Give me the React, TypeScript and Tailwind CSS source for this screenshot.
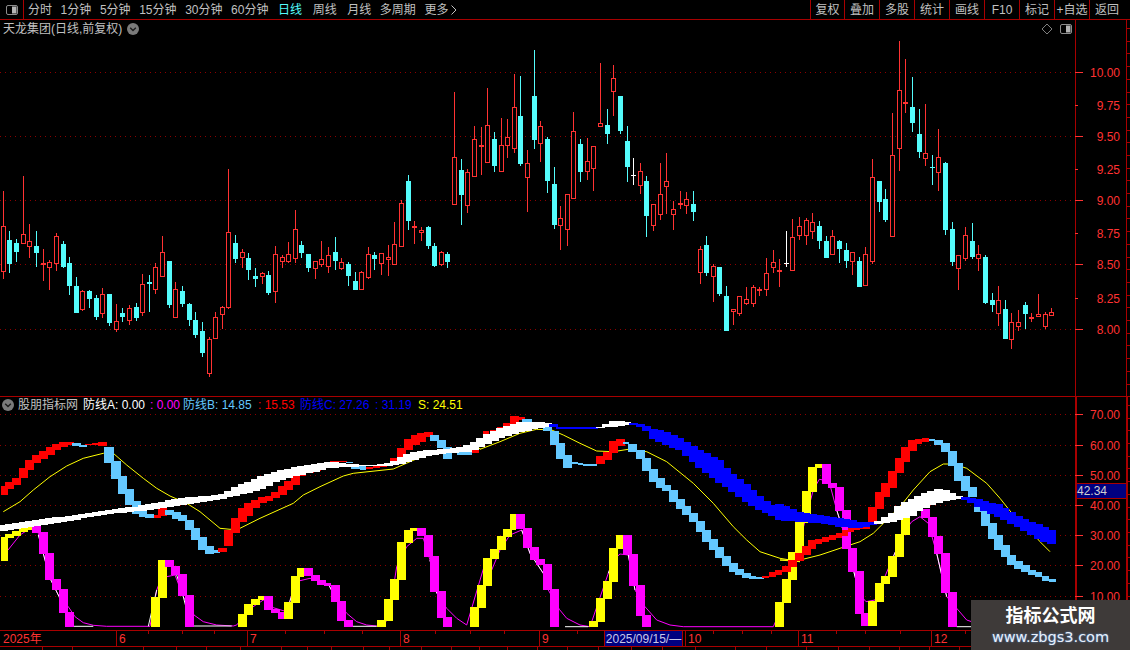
import React from 'react';

const RED = '#ff3232';
const CYAN = '#54fcfc';
const SKY = '#64c8ff';
const STEP = 6.633;

type Row = number[];
// candle rows were read from 3x crops: [centre, wick top, body top, body bottom, wick bottom]
type Candle = { x: number; wt: number; bt: number; bb: number; wb: number; kind: string };

const candleSeg = (x0: number, y0: number, rows: (number | string)[][]): Candle[] =>
    rows.map((r) => ({
        x: Math.round(x0 + (r[0] as number) / 3 - 0.2),
        wt: Math.round(y0 + (r[1] as number) / 3),
        bt: Math.round(y0 + (r[2] as number) / 3),
        bb: Math.round(y0 + (r[3] as number) / 3),
        wb: Math.round(y0 + (r[4] as number) / 3),
        kind: r[5] as string,
    }));

const candles: Candle[] = [
    ...candleSeg(0, 160, [
        [10, 93, 198, 335, 357, 'r'], [28, 213, 240, 312, 340, 'c'], [49, 237, 249, 276, 306, 'c'], [70, 48, 222, 252, 252, 'r'],
        [88, 192, 244, 260, 294, 'r'], [109, 213, 258, 279, 321, 'c'], [130, 267, 309, 315, 363, 'r'], [148, 300, 307, 323, 390, 'r'],
        [169, 219, 229, 311, 333, 'r'], [190, 243, 252, 321, 324, 'c'], [208, 291, 309, 378, 405, 'c'], [229, 351, 378, 459, 459, 'c'],
        [247, 390, 394, 449, 453, 'r'], [268, 390, 393, 417, 444, 'c'], [289, 405, 414, 471, 480, 'c'], [307, 384, 403, 461, 474, 'r'],
        [328, 402, 402, 489, 498, 'c'], [349, 432, 484, 509, 516, 'r'], [367, 444, 459, 471, 486, 'c'], [388, 435, 445, 482, 495, 'r'],
        [409, 429, 441, 474, 483, 'c'], [427, 342, 373, 458, 468, 'r'], [448, 345, 366, 372, 456, 'c'], [466, 309, 322, 391, 402, 'r'],
        [487, 228, 277, 350, 350, 'r'], [508, 303, 303, 435, 444, 'c'], [526, 366, 388, 473, 473, 'r'], [547, 378, 393, 432, 441, 'c'],
        [568, 429, 432, 480, 498, 'c'], [586, 456, 480, 525, 534, 'c'], [607, 486, 513, 579, 591, 'c'], [628, 531, 538, 641, 651, 'r'],
        [646, 456, 472, 536, 536, 'r'], [667, 438, 442, 464, 507, 'r'], [685, 27, 217, 443, 447, 'r'], [706, 225, 249, 297, 309, 'c'],
        [727, 267, 277, 293, 324, 'r'], [745, 279, 294, 330, 360, 'c'], [766, 324, 348, 357, 381, 'c'], [787, 336, 340, 350, 372, 'r'],
        [805, 333, 345, 399, 405, 'c'], [826, 258, 283, 395, 429, 'r'], [847, 285, 292, 305, 324, 'r'], [865, 246, 283, 305, 309, 'r'],
        [886, 150, 208, 296, 309, 'r'],
    ]),
    ...candleSeg(300, 50, [
        [5, 573, 585, 609, 624, 'c'], [25, 612, 612, 654, 666, 'c'], [46, 633, 634, 656, 687, 'r'], [64, 573, 628, 644, 651, 'r'],
        [85, 591, 616, 650, 669, 'r'], [106, 561, 606, 633, 660, 'c'], [124, 624, 637, 656, 660, 'r'], [145, 636, 642, 678, 708, 'c'],
        [166, 666, 693, 720, 720, 'c'], [184, 663, 667, 719, 720, 'r'], [205, 591, 613, 683, 687, 'r'], [223, 606, 615, 627, 660, 'c'],
        [244, 609, 610, 641, 675, 'r'], [265, 585, 622, 629, 678, 'r'], [283, 516, 583, 644, 644, 'r'], [304, 450, 460, 590, 590, 'r'],
        [325, 375, 393, 513, 540, 'c'], [343, 513, 528, 534, 582, 'r'], [364, 531, 541, 548, 573, 'r'], [385, 528, 531, 588, 597, 'c'],
        [403, 579, 588, 648, 651, 'c'], [424, 603, 607, 645, 648, 'r'], [442, 606, 612, 636, 654, 'c'], [463, 126, 322, 464, 464, 'r'],
        [484, 327, 360, 435, 525, 'c'], [502, 357, 367, 467, 489, 'r'], [523, 228, 268, 380, 380, 'r'], [544, 231, 285, 291, 375, 'r'],
        [562, 114, 226, 338, 338, 'r'], [583, 246, 267, 348, 366, 'c'], [604, 204, 286, 365, 365, 'r'], [622, 207, 262, 287, 324, 'r'],
        [643, 72, 172, 296, 309, 'r'], [661, 78, 198, 342, 348, 'c'], [682, 300, 340, 383, 486, 'r'], [703, 0, 138, 270, 297, 'c'],
        [721, 213, 229, 281, 336, 'r'], [742, 262, 267, 393, 429, 'c'], [763, 351, 402, 525, 537, 'c'], [781, 468, 505, 527, 600, 'r'],
        [802, 433, 433, 539, 588, 'r'], [820, 186, 244, 446, 446, 'r'], [841, 267, 282, 366, 396, 'c'], [862, 264, 334, 365, 390, 'r'],
        [880, 288, 289, 356, 423, 'r'],
    ]),
    ...candleSeg(600, 50, [
        [0, 39, 220, 230, 230, 'r'], [22, 177, 225, 252, 282, 'c'], [40, 45, 85, 125, 198, 'r'], [61, 138, 138, 243, 252, 'c'],
        [82, 228, 273, 351, 396, 'c'], [100, 324, 376, 377, 405, 'w'], [121, 339, 364, 407, 432, 'r'], [139, 378, 393, 498, 561, 'c'],
        [160, 462, 463, 527, 543, 'r'], [181, 339, 433, 495, 510, 'r'], [199, 309, 394, 410, 492, 'r'], [220, 453, 478, 494, 540, 'r'],
        [241, 423, 460, 464, 477, 'r'], [259, 426, 448, 467, 492, 'r'], [280, 423, 462, 486, 513, 'c'], [301, 588, 598, 670, 702, 'r'],
        [319, 558, 585, 669, 678, 'c'], [340, 642, 649, 680, 756, 'r'], [358, 651, 651, 732, 738, 'c'], [379, 708, 738, 843, 843, 'c'],
        [400, 778, 778, 785, 825, 'r'], [418, 739, 739, 791, 798, 'r'], [439, 711, 748, 762, 765, 'r'], [460, 705, 712, 762, 771, 'r'],
        [478, 711, 717, 723, 738, 'r'], [499, 624, 670, 719, 738, 'r'], [520, 600, 637, 653, 669, 'r'], [538, 627, 660, 665, 711, 'r'],
        [559, 543, 639, 641, 651, 'w'], [577, 507, 562, 662, 662, 'r'], [598, 501, 529, 557, 570, 'r'], [619, 504, 511, 557, 585, 'r'],
        [637, 489, 517, 547, 567, 'r'], [658, 513, 528, 573, 597, 'c'], [679, 558, 573, 624, 624, 'c'], [697, 540, 559, 614, 615, 'r'],
        [718, 570, 573, 597, 639, 'c'],
    ]),
    ...candleSeg(840, 30, [
        [19, 639, 660, 693, 714, 'c'], [37, 666, 667, 695, 735, 'r'], [58, 681, 693, 771, 771, 'c'], [76, 651, 673, 767, 767, 'r'],
        [97, 387, 442, 695, 702, 'r'], [118, 453, 453, 516, 546, 'c'], [136, 477, 507, 570, 576, 'c'], [157, 249, 376, 620, 620, 'r'],
        [178, 33, 181, 358, 423, 'r'], [196, 87, 217, 223, 249, 'r'], [217, 141, 231, 279, 306, 'c'], [238, 237, 312, 366, 384, 'c'],
        [256, 222, 370, 388, 408, 'r'], [277, 375, 411, 413, 465, 'w2'], [295, 297, 382, 428, 483, 'r'], [316, 396, 399, 600, 615, 'c'],
        [337, 576, 597, 696, 708, 'c'], [355, 676, 676, 716, 780, 'r'], [376, 591, 616, 686, 693, 'r'], [397, 579, 633, 681, 687, 'c'],
        [415, 645, 673, 686, 723, 'r'], [436, 675, 681, 820, 822, 'c'], [457, 789, 810, 825, 846, 'c'], [475, 768, 811, 851, 888, 'r'],
        [496, 810, 837, 927, 927, 'c'], [514, 849, 877, 929, 957, 'r'], [535, 840, 877, 890, 903, 'r'], [556, 816, 825, 852, 897, 'c'],
        [574, 849, 861, 866, 876, 'r'], [595, 792, 853, 862, 862, 'r'], [616, 846, 853, 890, 897, 'r'], [634, 834, 847, 859, 859, 'r'],
    ]),
];

type Bar = { x: number; w: number; y: number; h: number; fill: string };

const barSeg = (x0: number, y0: number, fill: string, rows: Row[]): Bar[] =>
    rows.map(([l, r, t, b]) => {
        const x = Math.round(x0 + l / 3);
        const y = Math.round(y0 + t / 3);
        return { x, w: Math.round(x0 + r / 3) - x, y, h: Math.max(1, Math.round(y0 + b / 3) - y), fill };
    });

// 防线A
const lineA: Bar[] = [
    ...barSeg(0, 510, '#ffff00', [[3, 24, 81, 153], [15, 42, 72, 85], [36, 63, 63, 78], [57, 84, 54, 66], [78, 96, 50, 60]]),
    ...barSeg(0, 510, '#ff00ff', [[96, 123, 48, 69], [117, 144, 66, 132], [135, 162, 129, 210], [156, 183, 207, 240], [177, 204, 237, 309], [195, 222, 306, 351]]),
    ...barSeg(0, 510, '#ffff00', [[453, 480, 261, 351], [474, 501, 150, 264]]),
    ...barSeg(0, 510, '#ff00ff', [[495, 522, 150, 171], [513, 540, 168, 196], [534, 561, 192, 258], [555, 582, 255, 351]]),
    ...barSeg(0, 510, '#ffff00', [[714, 741, 312, 351], [732, 759, 282, 315], [753, 780, 267, 285], [774, 792, 258, 270]]),
    ...barSeg(0, 510, '#ff00ff', [[792, 819, 258, 300], [813, 840, 297, 309], [834, 861, 306, 327]]),
    ...barSeg(0, 510, '#ffff00', [[852, 879, 276, 327], [873, 900, 198, 279], [891, 912, 174, 200]]),
    ...barSeg(0, 510, '#ff00ff', [[912, 939, 174, 198], [933, 960, 195, 213], [951, 978, 210, 225], [972, 993, 219, 228], [993, 1020, 225, 276], [1011, 1038, 273, 333], [1032, 1059, 330, 351]]),
    ...barSeg(0, 510, '#ffff00', [[1131, 1158, 330, 351], [1152, 1179, 267, 333], [1170, 1197, 207, 270], [1191, 1218, 96, 210], [1212, 1239, 60, 99], [1230, 1251, 54, 63]]),
    ...barSeg(0, 510, '#ff00ff', [[1251, 1278, 54, 78], [1272, 1299, 75, 141], [1290, 1317, 138, 246], [1311, 1338, 243, 324], [1329, 1356, 321, 351]]),
    ...barSeg(480, 400, '#ffff00', [[-30, -3, 621, 681], [-9, 18, 556, 624], [9, 36, 474, 558], [30, 57, 447, 477], [51, 78, 408, 450], [69, 96, 387, 411], [90, 108, 342, 390]]),
    ...barSeg(480, 400, '#ff00ff', [[108, 135, 342, 387], [129, 156, 384, 444], [150, 177, 441, 480], [168, 195, 477, 495], [189, 216, 492, 570], [210, 237, 567, 681]]),
    ...barSeg(480, 400, '#ffff00', [[327, 354, 663, 681], [348, 375, 594, 666], [369, 396, 543, 597], [387, 414, 444, 546], [408, 429, 405, 447]]),
    ...barSeg(480, 400, '#ff00ff', [[429, 456, 405, 465], [447, 474, 462, 558], [468, 495, 555, 648], [486, 513, 645, 681]]),
    ...barSeg(780, 400, '#ffff00', [[-15, 12, 606, 681], [6, 33, 537, 609], [24, 51, 456, 540], [45, 72, 366, 459], [66, 93, 273, 369], [84, 111, 201, 276], [105, 126, 192, 204]]),
    ...barSeg(780, 400, '#ff00ff', [[126, 153, 192, 252], [144, 171, 249, 264], [165, 192, 261, 333], [186, 213, 330, 447], [204, 231, 444, 516], [225, 252, 513, 642], [243, 270, 639, 678]]),
    ...barSeg(780, 400, '#ffff00', [[264, 291, 603, 678], [285, 312, 549, 606], [303, 330, 528, 552], [324, 351, 468, 531], [345, 372, 402, 471], [363, 390, 345, 405], [384, 411, 330, 348]]),
    ...barSeg(780, 400, '#ff00ff', [[423, 450, 327, 354], [444, 471, 351, 411], [462, 489, 408, 462], [483, 510, 459, 579], [504, 531, 576, 681]]),
];

// 防线B
const lineB: Bar[] = [
    ...barSeg(0, 390, '#ff0000', [[3, 24, 288, 315], [15, 42, 276, 297], [36, 63, 264, 285], [57, 84, 234, 264], [75, 102, 210, 240], [96, 123, 195, 219], [117, 144, 183, 207], [138, 165, 171, 195], [156, 183, 162, 180], [177, 204, 156, 171], [195, 222, 156, 165]]),
    ...barSeg(0, 390, SKY, [[216, 243, 159, 168], [237, 261, 165, 171]]),
    ...barSeg(0, 390, '#ff0000', [[255, 282, 162, 165], [276, 303, 159, 165], [294, 321, 156, 168]]),
    ...barSeg(0, 390, SKY, [[312, 342, 171, 219], [333, 363, 213, 267], [354, 381, 258, 312], [375, 402, 297, 345], [396, 423, 333, 372], [417, 441, 363, 381], [435, 462, 372, 384]]),
    ...barSeg(0, 390, '#ff0000', [[462, 483, 375, 384], [474, 501, 351, 378]]),
    ...barSeg(0, 390, SKY, [[495, 522, 360, 375], [516, 543, 366, 387], [534, 561, 375, 393]]),
    ...barSeg(0, 510, SKY, [[555, 582, 30, 60], [573, 600, 54, 90], [594, 621, 81, 120], [615, 642, 108, 132], [639, 660, 120, 129]]),
    ...barSeg(0, 510, '#ff0000', [[654, 681, 114, 126], [672, 699, 60, 108], [693, 720, 24, 69]]),
    ...barSeg(0, 390, '#ff0000', [[714, 741, 354, 396], [732, 759, 339, 378], [753, 780, 330, 354], [774, 801, 321, 339], [795, 819, 318, 333], [813, 840, 306, 324], [834, 861, 288, 315], [852, 879, 273, 300], [873, 900, 258, 285], [894, 918, 249, 258], [915, 942, 240, 250], [936, 963, 234, 244], [960, 990, 222, 232], [990, 1040, 213, 216]]),
    ...barSeg(0, 390, SKY, [[1038, 1060, 216, 220], [1053, 1080, 225, 238], [1080, 1098, 228, 241]]),
    ...barSeg(0, 390, '#ff0000', [[1098, 1119, 231, 237], [1119, 1140, 228, 234], [1140, 1160, 222, 230], [1170, 1191, 204, 216], [1191, 1218, 174, 204], [1212, 1239, 147, 180], [1233, 1260, 135, 165], [1251, 1278, 129, 156], [1272, 1299, 126, 141]]),
    ...barSeg(0, 390, SKY, [[1290, 1317, 135, 153], [1311, 1338, 150, 174], [1329, 1356, 171, 207], [1350, 1371, 183, 189], [1371, 1392, 186, 195], [1392, 1416, 186, 195]]),
    ...barSeg(0, 390, '#ff0000', [[1416, 1437, 177, 189]]),
    ...barSeg(480, 400, '#ff0000', [[9, 27, 93, 102], [30, 48, 90, 100], [51, 69, 81, 93], [69, 90, 69, 84], [90, 117, 48, 72], [117, 135, 51, 60]]),
    ...barSeg(480, 400, SKY, [[126, 156, 57, 69], [189, 216, 81, 93], [210, 237, 93, 135], [228, 255, 129, 177], [249, 276, 165, 204], [276, 294, 186, 192], [294, 309, 189, 195], [309, 330, 192, 198], [330, 351, 192, 198]]),
    ...barSeg(480, 400, '#ff0000', [[348, 375, 168, 192], [369, 396, 156, 180], [387, 414, 123, 159], [408, 435, 117, 138]]),
    ...barSeg(480, 400, SKY, [[429, 447, 126, 132], [444, 471, 132, 156], [468, 495, 150, 177], [486, 513, 174, 213], [507, 534, 207, 246], [528, 555, 234, 264], [546, 573, 255, 273], [567, 594, 270, 306], [588, 615, 297, 327], [606, 633, 318, 345], [627, 654, 339, 366], [648, 675, 363, 396], [666, 693, 390, 426], [687, 714, 417, 450], [705, 732, 441, 474], [726, 753, 468, 498], [747, 774, 489, 516], [765, 792, 507, 525], [786, 813, 519, 534], [807, 828, 528, 537], [828, 852, 531, 537]]),
    ...barSeg(480, 400, '#ff0000', [[846, 867, 528, 534], [867, 888, 516, 531], [885, 906, 510, 525], [906, 933, 498, 516]]),
    ...barSeg(780, 400, '#ff0000', [[24, 51, 480, 501], [45, 72, 459, 483], [66, 93, 438, 465], [84, 108, 420, 447], [105, 126, 417, 432], [126, 147, 411, 426], [147, 168, 405, 420], [168, 186, 399, 414], [186, 204, 390, 408], [204, 222, 381, 396], [222, 240, 381, 390], [240, 270, 378, 387]]),
    ...barSeg(780, 400, '#ff0000', [[264, 291, 321, 366], [285, 312, 276, 327], [303, 330, 249, 291], [324, 351, 213, 264], [345, 372, 174, 219], [363, 390, 141, 186], [384, 411, 120, 153], [405, 426, 117, 132], [426, 447, 114, 126]]),
    ...barSeg(780, 400, SKY, [[447, 465, 117, 123], [462, 489, 120, 135], [483, 510, 129, 156], [504, 531, 153, 198], [522, 549, 189, 243], [543, 570, 228, 273], [564, 591, 261, 291], [582, 606, 312, 336], [603, 630, 333, 378], [624, 651, 369, 417], [642, 669, 405, 450], [663, 690, 435, 471], [681, 708, 465, 495], [702, 729, 483, 507], [723, 750, 495, 516], [744, 768, 510, 525], [765, 786, 516, 531], [786, 807, 528, 543], [807, 828, 537, 546]]),
];

// 防线C keypoints: [x, top, bottom], filled in per candle below
const ribbonC: Row[] = [
    [0, 526, 531], [40, 519, 525], [80, 515, 519], [100, 511, 515], [140, 506, 511], [180, 498, 505], [220, 495, 499], [240, 485, 495],
    [260, 477, 490], [280, 470, 480], [310, 465, 473], [330, 462, 468], [350, 464, 467], [370, 465, 466], [390, 463, 466], [410, 453, 462],
    [430, 450, 455], [450, 449, 453], [470, 445, 452], [480, 438, 447], [500, 428, 438], [520, 422, 432], [540, 422, 428], [552, 423, 427],
    [560, 427, 429], [590, 427, 429], [600, 427, 428], [612, 421, 427], [625, 421, 425], [632, 423, 425], [645, 425, 428], [650, 428, 437],
    [670, 433, 447], [680, 438, 450], [700, 450, 468], [720, 460, 483], [730, 472, 490], [750, 487, 505], [770, 505, 515], [780, 504, 520],
    [800, 512, 522], [820, 515, 523], [840, 518, 527], [860, 522, 528], [877, 522, 524], [890, 515, 522], [900, 505, 520], [910, 500, 517],
    [920, 495, 510], [940, 488, 502], [950, 492, 500], [962, 497, 498], [970, 498, 502], [983, 500, 510], [1000, 505, 518], [1020, 517, 528],
    [1040, 525, 540], [1055, 532, 545],
];

const lerpC = (x: number) => {
    for (let k = 1; k < ribbonC.length; k++) {
        const [x1, t1, b1] = ribbonC[k - 1];
        const [x2, t2, b2] = ribbonC[k];
        if (x <= x2) {
            const f = (x - x1) / (x2 - x1);
            return [t1 + (t2 - t1) * f, b1 + (b2 - b1) * f];
        }
    }
    return [532, 545];
};

const isWhiteC = (x: number) => x < 552 || (x > 600 && x < 632) || (x > 877 && x < 965);

const lineC: Bar[] = Array.from({ length: 159 }, (_, i) => {
    const cx = 3.3 + STEP * i;
    const [t, b] = lerpC(cx);
    const left = Math.max(0, Math.round(cx - 4.5));
    const y = Math.round(t);
    return { x: left, w: Math.round(cx + 4.5) - left, y, h: Math.max(1, Math.round(b) - y), fill: isWhiteC(cx) ? '#ffffff' : '#0000ff' };
});

const pts = (x0: number, y0: number, s: string) =>
    s.split(' ').map((p) => {
        const [a, b] = p.split(',').map(Number);
        return `${(x0 + a / 3).toFixed(1)},${(y0 + b / 3).toFixed(1)}`;
    }).join(' ');

const lineS = [
    pts(0, 390, '10,365 60,335 100,300 150,260 200,228 250,205 310,190 340,190 380,225 430,265 470,295 510,318 560,340 600,365 630,390 660,415 690,418 720,415 780,385 880,340 910,315 960,290 1030,258 1060,250 1180,237 1230,215 1290,190 1410,180 1440,175'),
    pts(480, 400, '0,148 60,125 120,100 170,88 215,90 250,105 300,130 350,153 400,155 445,148 500,155 560,185 640,250 700,310 760,380 800,420 840,455 900,475 960,485'),
    pts(780, 400, '0,480 60,480 120,465 180,445 240,425 280,400 320,360 360,320 400,270 450,215 490,192 520,192 560,205 620,250 660,295 700,345 750,390 780,425 810,455'),
].join(' ');

const curveA = [
    pts(0, 510, '24,120 60,75 95,52 115,70 135,150 150,205 175,255 205,290 225,320 250,338 280,346 320,349 450,349 470,240 478,220 500,200 525,195 550,260 582,315 610,335 650,345 700,348 710,345 745,300 790,270 810,290 860,305 880,240 900,212 930,205 985,222 1010,270 1040,310 1070,335 1100,345 1130,348 1165,330 1190,170 1220,110 1250,85 1270,85 1290,150 1310,250 1340,295 1370,325 1400,345'),
    pts(480, 400, '12,500 35,510 60,450 90,405 125,390 150,460 190,520 205,570 238,628 260,655 300,675 330,680 385,520 400,480 420,462 445,465 465,570 495,620 530,660 570,675 610,680 880,680 915,600'),
    pts(780, 400, '30,530 60,420 100,270 118,238 130,240 150,255 170,330 205,440 225,530 245,590 258,605 285,600 340,470 370,400 395,365 420,350 445,370 470,460 500,590 530,625 560,660 575,665'),
].join(' ');

const curveAWhite = [
    pts(0, 510, '115,75 135,150 150,205 175,255 190,290'),
    pts(0, 510, '222,349 280,349'),
    pts(0, 510, '445,349 470,240'),
    pts(0, 510, '530,195 550,260 560,300'),
    pts(0, 510, '582,348 695,348'),
    pts(0, 510, '860,305 880,240'),
    pts(0, 510, '985,222 1010,270 1030,300'),
    pts(0, 510, '1058,349 1130,349'),
    pts(0, 510, '1290,150 1310,250'),
    pts(480, 400, '125,390 150,460 190,520 205,570'),
    pts(480, 400, '255,680 325,680'),
    pts(480, 400, '385,520 400,480'),
    pts(480, 400, '445,465 465,570'),
    pts(780, 400, '170,330 205,440 225,530 245,590'),
    pts(780, 400, '470,460 500,590'),
    pts(780, 400, '530,680 575,680'),
    pts(780, 400, '340,470 370,400'),
];

const priceGrid = [72, 136, 200, 264, 329];
const priceLabels = [
    { y: 72, t: '10.00', major: true }, { y: 105, t: '9.75' }, { y: 136, t: '9.50', major: true }, { y: 169, t: '9.25' },
    { y: 200, t: '9.00', major: true }, { y: 233, t: '8.75' }, { y: 264, t: '8.50', major: true }, { y: 298, t: '8.25' }, { y: 329, t: '8.00', major: true },
];
const indicatorLabels = [
    { y: 414, t: '70.00' }, { y: 445, t: '60.00' }, { y: 475, t: '50.00' }, { y: 505, t: '40.00' },
    { y: 535, t: '30.00' }, { y: 565, t: '20.00' }, { y: 596, t: '10.00' },
];

const leftTabs = [
    { label: '分时', cls: '' }, { label: '1分钟', cls: '' }, { label: '5分钟', cls: '' }, { label: '15分钟', cls: '' }, { label: '30分钟', cls: '' }, { label: '60分钟', cls: '' },
    { label: '日线', cls: 'ml-[1px] text-[#54fcfc]' }, { label: '周线', cls: 'ml-[2px]' }, { label: '月线', cls: 'ml-[2px]' }, { label: '多周期', cls: '' },
];
const rightTabs = ['复权', '叠加', '多股', '统计', '画线', 'F10', '标记', '+自选', '返回'];

const dates = [
    { x: 116, t: '6' }, { x: 247, t: '7' }, { x: 400, t: '8' }, { x: 539, t: '9' }, { x: 685, t: '10' }, { x: 798, t: '11' }, { x: 931, t: '12' },
];
const dateTicks = [148, 182, 214, 285, 324, 362, 435, 470, 504, 577, 713, 742, 771, 836, 865, 900, 965];
const bottomEdges = [0, 43, 73, 144, 177, 207, 241, 282, 308, 332, 364, 390, 422, 452, 480, 508, 538, 568, 599, 632, 663, 696, 736, 767, 807, 839, 870, 900, 930, 960];

const PanelIcon = () => (
    <svg width="12" height="10" viewBox="0 0 12 10">
        <rect x="0.5" y="0.5" width="11" height="9" rx="1.5" fill="none" stroke="#8c8c8c" />
        <rect x="6" y="1.5" width="4.5" height="7" fill="#b4b4b4" />
    </svg>
);

const ChevronDot = () => (
    <svg width="12" height="12" viewBox="0 0 12 12">
        <circle cx="6" cy="6" r="6" fill="#7a7a7a" />
        <path d="M3.2 4.8 L6 7.6 L8.8 4.8" fill="none" stroke="#1c1c1c" strokeWidth="1.4" />
    </svg>
);

const Bars = ({ items }: { items: Bar[] }) => (
    <>
        {items.map((b, i) => (
            <rect key={i} x={b.x} y={b.y} width={b.w} height={b.h} fill={b.fill} />
        ))}
    </>
);

const CandleMark = ({ c }: { c: Candle }) => {
    if (c.kind === 'w' || c.kind === 'w2') {
        const color = c.kind === 'w' ? '#ffffff' : CYAN;
        return (
            <g fill={color}>
                <rect x={c.x} y={c.wt} width={1} height={c.wb - c.wt} />
                <rect x={c.x - 2} y={c.bt} width={5} height={1} />
            </g>
        );
    }
    const color = c.kind === 'r' ? RED : CYAN;
    const thin = c.bb - c.bt <= 2;
    return (
        <g>
            <rect x={c.x} y={c.wt} width={1} height={c.wb - c.wt} fill={color} />
            {c.kind === 'c' || thin ? (
                <rect x={c.x - 2} y={c.bt} width={5} height={Math.max(2, c.bb - c.bt)} fill={color} />
            ) : (
                <rect x={c.x - 1.5} y={c.bt + 0.5} width={4} height={c.bb - c.bt - 1} fill="#000000" stroke={color} />
            )}
        </g>
    );
};

const AxisRuler = ({ y1, y2 }: { y1: number; y2: number }) => {
    const ticks: number[] = [];
    for (let y = y1 + 8; y < y2; y += 12.7) ticks.push(Math.round(y));
    return (
        <g stroke="#a80000">
            {ticks.map((y) => (
                <line key={y} x1={1127} x2={1130} y1={y + 0.5} y2={y + 0.5} />
            ))}
        </g>
    );
};

export default function App() {
    return (
        <div className="relative flex h-[650px] w-[1130px] flex-col overflow-hidden bg-black font-['Liberation_Sans','Noto_Sans_CJK_SC',sans-serif] text-[12px] leading-none text-[#c0c0c0]">
            {/* Toolbar */}
            <div className="flex h-[20px] shrink-0 items-stretch justify-between border-b border-[#a80000]">
                <div className="flex items-center">
                    <div className="flex h-full w-[24px] items-center justify-center border-r border-[#a80000]">
                        <PanelIcon />
                    </div>
                    <div className="ml-[4px] flex items-center gap-[8.6px]">
                        {leftTabs.map((t) => (
                            <span key={t.label} className={t.cls}>
                                {t.label}
                            </span>
                        ))}
                        <span className="flex items-center">
                            更多
                            <svg className="ml-[3px]" width="6" height="10" viewBox="0 0 6 10">
                                <path d="M0.5 0.5 L5 5 L0.5 9.5" fill="none" stroke="#c0c0c0" />
                            </svg>
                        </span>
                    </div>
                </div>
                <div className="flex w-[320px]">
                    {rightTabs.map((t) => (
                        <div key={t} className="flex w-[35px] items-center justify-center whitespace-nowrap border-l border-[#a80000] first:w-[34px]">
                            {t}
                        </div>
                    ))}
                    <div className="w-[6px]" />
                </div>
            </div>

            {/* Price panel */}
            <div className="relative h-[377px] shrink-0 border-b border-[#a80000]">
                <svg className="block" width="1130" height="376" viewBox="0 20 1130 376" shapeRendering="crispEdges">
                    {priceGrid.map((y) => (
                        <line key={y} x1={0} x2={1075} y1={y + 0.5} y2={y + 0.5} stroke="#8c0000" strokeDasharray="1 4" />
                    ))}
                    {candles.map((c, i) => (
                        <CandleMark key={i} c={c} />
                    ))}
                    <line x1={1075.5} x2={1075.5} y1={20} y2={396} stroke="#a80000" />
                    <line x1={1126.5} x2={1126.5} y1={20} y2={396} stroke="#a80000" />
                    <AxisRuler y1={20} y2={396} />
                    {priceLabels.map((l) => (
                        <g key={l.t}>
                            <line x1={1075} x2={l.major ? 1083 : 1078} y1={l.y + 0.5} y2={l.y + 0.5} stroke={RED} />
                            <text x={1120} y={l.y + 4.5} textAnchor="end" fontSize="12" fill={RED}>
                                {l.t}
                            </text>
                        </g>
                    ))}
                </svg>
                <div className="absolute left-[3px] top-[3px] flex items-center gap-[5px]">
                    <span>天龙集团(日线,前复权)</span>
                    <ChevronDot />
                </div>
                <div className="absolute left-[1042px] top-[4px] flex items-center gap-[8px]">
                    <svg width="10" height="10" viewBox="0 0 10 10">
                        <path d="M5 0 L10 5 L5 10 L0 5 Z" fill="none" stroke="#808080" />
                    </svg>
                    <PanelIcon />
                </div>
            </div>

            {/* Indicator panel */}
            <div className="relative h-[234px] shrink-0 border-b border-[#a80000]">
                <svg className="block" width="1130" height="233" viewBox="0 397 1130 233" shapeRendering="crispEdges">
                    {indicatorLabels.map((l) => (
                        <line key={l.y} x1={0} x2={1075} y1={l.y + 0.5} y2={l.y + 0.5} stroke="#8c0000" strokeDasharray="1 4" />
                    ))}
                    <g shapeRendering="auto" fill="none">
                        <polyline points={lineS} stroke="#ffff00" strokeWidth="1" />
                        <polyline points={curveA} stroke="#ff00ff" strokeWidth="1" />
                        {curveAWhite.map((p, i) => (
                            <polyline key={i} points={p} stroke="#ffffff" strokeWidth="1" />
                        ))}
                    </g>
                    <Bars items={lineA} />
                    <Bars items={lineB} />
                    <Bars items={lineC} />
                    <rect x={1075} y={397} width={2} height={233} fill="#a80000" />
                    <rect x={1126} y={397} width={2} height={233} fill="#a80000" />
                    <AxisRuler y1={397} y2={630} />
                    {indicatorLabels.map((l) => (
                        <g key={l.t}>
                            <line x1={1075} x2={1083} y1={l.y + 0.5} y2={l.y + 0.5} stroke={RED} />
                            <text x={1120} y={l.y + 4.5} textAnchor="end" fontSize="12" fill={RED}>
                                {l.t}
                            </text>
                        </g>
                    ))}
                </svg>
                <div className="absolute left-[2px] top-[2px] flex items-center whitespace-nowrap">
                    <ChevronDot />
                    <span className="ml-[4px] w-[65px]">股朋指标网</span>
                    <span className="w-[67px] text-white">防线A: 0.00</span>
                    <span className="w-[33px] text-[#ff00ff]">: 0.00</span>
                    <span className="w-[75px] text-[#64c8ff]">防线B: 14.85</span>
                    <span className="w-[42px] text-[#ff0000]">: 15.53</span>
                    <span className="w-[75px] text-[#0000ff]">防线C: 27.26</span>
                    <span className="w-[43px] text-[#0000ff]">: 31.19</span>
                    <span className="text-[#ffff00]">S: 24.51</span>
                </div>
                <div className="absolute left-[1077px] top-[86px] flex h-[16px] w-[49px] items-center border-y border-[#a80000] bg-[#000080] text-[#d0d0d0]">
                    42.34
                </div>
            </div>

            {/* Date axis */}
            <div className="relative h-[16px] shrink-0 border-b border-[#a80000] text-[#ff3232]">
                <span className="absolute left-[3px] top-[2px]">2025年</span>
                {dates.map((d) => (
                    <span key={d.t} className="absolute top-0 h-full border-l border-[#a80000] pl-[2px] pt-[2px]" style={{ left: d.x }}>
                        {d.t}
                    </span>
                ))}
                {dateTicks.map((x) => (
                    <span key={x} className="absolute top-0 h-[3px] w-px bg-[#a80000]" style={{ left: x }} />
                ))}
                <span className="absolute left-[604px] top-0 flex h-full w-[79px] items-center justify-center border-x border-[#a80000] bg-[#000080] text-[#c8c8e8]">
                    2025/09/15/—
                </span>
            </div>

            {/* Tab strip, only its top edge fits in the window */}
            <div className="flex h-[3px] overflow-hidden">
                {bottomEdges.slice(1).map((x, i) => (
                    <div key={x} className="shrink-0 border-r border-[#a80000]" style={{ width: x - bottomEdges[i] }} />
                ))}
            </div>

            {/* Watermark */}
            <div className="absolute bottom-0 right-0 flex h-[50px] w-[159px] flex-col items-center bg-[#3e3a39] pt-[5px]">
                <span className="text-[18px] font-bold leading-[22px] text-white">指标公式网</span>
                <span className="mt-[1px] font-['DejaVu_Sans',sans-serif] text-[14.5px] leading-[18px] text-[#e8f0fa] [text-shadow:0_0_2px_#5a94e0]">
                    www.zbgs3.com
                </span>
            </div>
        </div>
    );
}
